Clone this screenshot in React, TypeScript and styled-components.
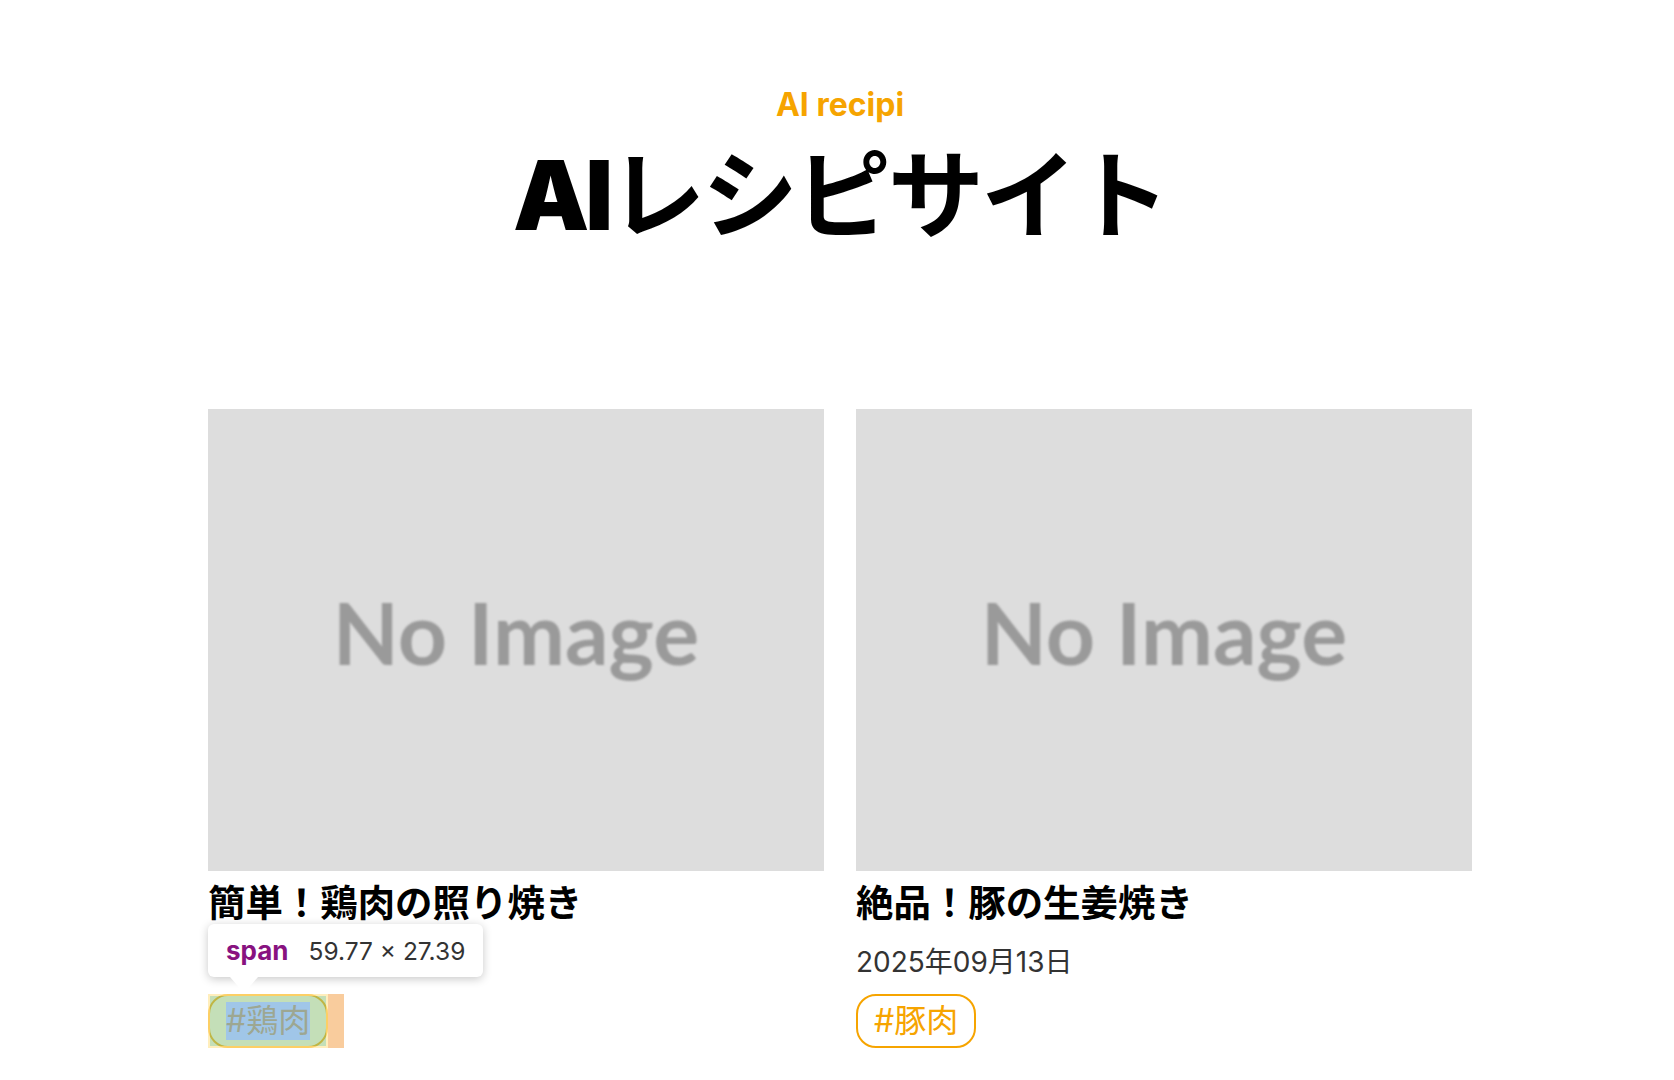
import React from "react";
import styled, { createGlobalStyle } from "styled-components";

const ORANGE = "#f6a400";

const GlobalStyle = createGlobalStyle`
  html, body {
    margin: 0;
    padding: 0;
    background: #ffffff;
  }
  body {
    font-family: "Inter", "Noto Sans CJK JP", sans-serif;
    color: #000;
  }
`;

const Page = styled.div`
  min-height: 1080px;
  padding-left: 6px;
`;

const Header = styled.header`
  display: flex;
  flex-direction: column;
  align-items: center;
  padding-top: 86px;
`;

const Eyebrow = styled.p`
  margin: 0;
  font-size: 32px;
  line-height: 38px;
  font-weight: 700;
  color: ${ORANGE};
`;

const Title = styled.h1`
  margin: 15px 0 0;
  font-size: 96px;
  line-height: 100px;
  font-weight: 700;
  letter-spacing: -3px;
  font-family: "Noto Sans CJK JP", sans-serif;
`;

const TitleLatin = styled.span`
  font-family: "Inter", sans-serif;
  font-weight: 900;
  letter-spacing: -4px;
`;

const Grid = styled.section`
  display: grid;
  grid-template-columns: repeat(2, 616px);
  column-gap: 32px;
  justify-content: center;
  margin-top: 164px;
`;

const Card = styled.article`
  display: flex;
  flex-direction: column;
  align-items: flex-start;
`;

const Thumb = styled.div`
  width: 100%;
  aspect-ratio: 4 / 3;
  background: #dddddd;
  display: flex;
  align-items: center;
  justify-content: center;
`;

const NoImage = styled.span`
  font-family: "Lato", "Open Sans", sans-serif;
  font-size: 86px;
  font-weight: 700;
  color: #9a9a9a;
  filter: blur(1.2px);
  margin-top: -18px;
`;

const CardTitle = styled.h3`
  margin: 6px 0 0;
  font-size: 37.44px;
  line-height: 54px;
  font-weight: 700;
`;

const DateText = styled.p`
  margin: 11px 0 0;
  font-size: 28px;
  line-height: 40px;
  color: #333333;
`;

const TagRow = styled.div`
  position: relative;
  display: flex;
  margin-top: 12px;
`;

const TagWrap = styled.span`
  position: relative;
  display: inline-flex;
  margin-right: 16px;
`;

const Tag = styled.span`
  display: inline-block;
  padding: 6px 16px;
  border: 2px solid ${ORANGE};
  border-radius: 20px;
  font-size: 32px;
  line-height: 38px;
  color: ${ORANGE};
  background: #fff;
`;

/* DevTools inspect highlight overlay: each box region tinted once */
const MarginBox = styled.span`
  position: absolute;
  top: 0;
  bottom: 0;
  left: 100%;
  width: 16px;
  background: rgba(246, 178, 107, 0.66);
  pointer-events: none;
`;

const BorderBox = styled.span`
  position: absolute;
  inset: 0;
  border: 2px solid rgba(255, 229, 153, 0.66);
  pointer-events: none;
`;

const PaddingBox = styled.span`
  position: absolute;
  inset: 2px;
  border-style: solid;
  border-color: rgba(147, 196, 125, 0.55);
  border-width: 6px 16px;
  pointer-events: none;
`;

const ContentBox = styled.span`
  position: absolute;
  inset: 8px 18px;
  background: rgba(111, 168, 220, 0.66);
  pointer-events: none;
`;

const Tooltip = styled.div`
  position: absolute;
  left: 0;
  bottom: calc(100% + 17px);
  display: flex;
  align-items: center;
  gap: 20px;
  height: 53px;
  padding: 0 18px;
  background: #fff;
  border-radius: 6px;
  box-shadow: 0 2px 10px rgba(0, 0, 0, 0.22);
  white-space: nowrap;
  font-family: "Inter", sans-serif;
  font-size: 24.5px;
  z-index: 2;

  &::after {
    content: "";
    position: absolute;
    left: 22px;
    top: 100%;
    border-left: 14px solid transparent;
    border-right: 14px solid transparent;
    border-top: 16px solid #fff;
  }
`;

const TipTag = styled.span`
  color: #881280;
  font-weight: 700;
  font-size: 26px;
`;

const TipSize = styled.span`
  color: #333333;
`;

type Recipe = {
  title: string;
  date: string;
  tag: string;
  inspected?: boolean;
};

const recipes: Recipe[] = [
  { title: "簡単！鶏肉の照り焼き", date: "2025年09月13日", tag: "#鶏肉", inspected: true },
  { title: "絶品！豚の生姜焼き", date: "2025年09月13日", tag: "#豚肉" },
];

function RecipeCard({ recipe }: { recipe: Recipe }) {
  return (
    <Card>
      <Thumb>
        <NoImage>No Image</NoImage>
      </Thumb>
      <CardTitle>{recipe.title}</CardTitle>
      <DateText>{recipe.date}</DateText>
      <TagRow>
        <TagWrap>
          <Tag>{recipe.tag}</Tag>
          {recipe.inspected && (
            <>
              <MarginBox />
              <BorderBox />
              <PaddingBox />
              <ContentBox />
              <Tooltip>
                <TipTag>span</TipTag>
                <TipSize>59.77 × 27.39</TipSize>
              </Tooltip>
            </>
          )}
        </TagWrap>
      </TagRow>
    </Card>
  );
}

export default function App() {
  return (
    <>
      <GlobalStyle />
      <Page>
        <Header>
          <Eyebrow>AI recipi</Eyebrow>
          <Title>
            <TitleLatin>AI</TitleLatin>レシピサイト
          </Title>
        </Header>
        <Grid>
          {recipes.map((r) => (
            <RecipeCard key={r.title} recipe={r} />
          ))}
        </Grid>
      </Page>
    </>
  );
}
